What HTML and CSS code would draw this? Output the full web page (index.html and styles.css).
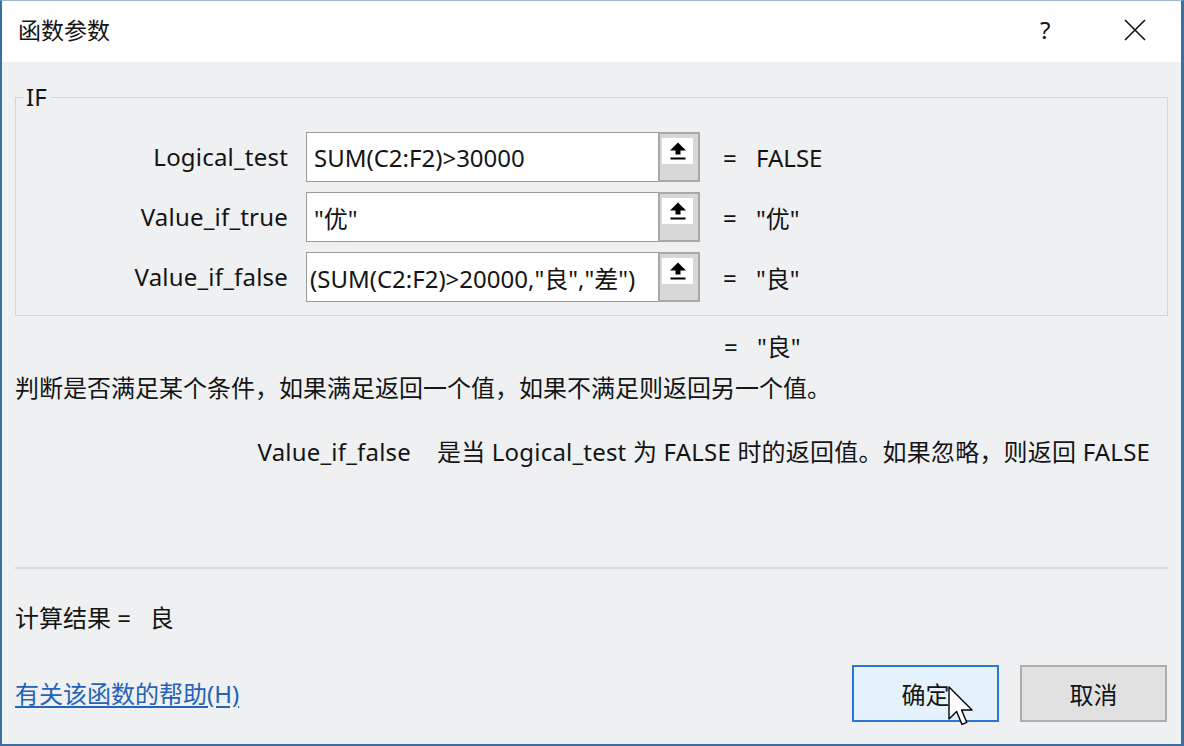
FILE: index.html
```html
<!DOCTYPE html>
<html lang="zh-CN">
<head>
<meta charset="utf-8">
<title>函数参数</title>
<link rel="stylesheet" href="styles.css">
</head>
<body>
<div class="window">
  <div class="titlebar">
    <span class="title">函数参数</span>
    <div class="ctrls">
      <span class="help">?</span>
      <svg class="close" width="22" height="22" viewBox="0 0 22 22"><path d="M1 1 L21 21 M21 1 L1 21" stroke="#111" stroke-width="1.6" fill="none"/></svg>
    </div>
  </div>
  <div class="body">
    <fieldset class="group">
      <legend>IF</legend>
      <div class="args">
        <div class="label">Logical_test</div>
        <div class="field">
          <div class="input"><span>SUM(C2:F2)&gt;30000</span></div>
          <div class="refbtn"><div class="refinner"><svg width="18" height="18" viewBox="0 0 18 18"><path d="M9 0.5 L1 8.5 H6.5 V12.5 H11.5 V8.5 H17 Z" fill="#000"/><rect x="1.5" y="15.5" width="15" height="2" fill="#000"/></svg></div></div>
        </div>
        <div class="result"><span class="eq">=</span><span>FALSE</span></div>

        <div class="label">Value_if_true</div>
        <div class="field">
          <div class="input"><span>"优"</span></div>
          <div class="refbtn"><div class="refinner"><svg width="18" height="18" viewBox="0 0 18 18"><path d="M9 0.5 L1 8.5 H6.5 V12.5 H11.5 V8.5 H17 Z" fill="#000"/><rect x="1.5" y="15.5" width="15" height="2" fill="#000"/></svg></div></div>
        </div>
        <div class="result"><span class="eq">=</span><span>"优"</span></div>

        <div class="label">Value_if_false</div>
        <div class="field">
          <div class="input tight"><span>(SUM(C2:F2)&gt;20000,"良","差")</span></div>
          <div class="refbtn"><div class="refinner"><svg width="18" height="18" viewBox="0 0 18 18"><path d="M9 0.5 L1 8.5 H6.5 V12.5 H11.5 V8.5 H17 Z" fill="#000"/><rect x="1.5" y="15.5" width="15" height="2" fill="#000"/></svg></div></div>
        </div>
        <div class="result"><span class="eq">=</span><span>"良"</span></div>
      </div>
    </fieldset>

    <div class="args total">
      <div></div>
      <div></div>
      <div class="result"><span class="eq">=</span><span>"良"</span></div>
    </div>

    <p class="desc">判断是否满足某个条件，如果满足返回一个值，如果不满足则返回另一个值。</p>
    <div class="argdesc">
      <span class="argname">Value_if_false</span>
      <span class="argtext">是当 Logical_test 为 FALSE 时的返回值。如果忽略，则返回 FALSE</span>
    </div>

    <div class="sep"></div>
    <div class="calc">计算结果 =&nbsp;&nbsp; 良</div>

    <div class="footer">
      <a class="helplink" href="#">有关该函数的帮助(H)</a>
      <div class="buttons">
        <button class="btn ok">确定</button>
        <button class="btn">取消</button>
      </div>
    </div>
  </div>
  <svg class="cursor" width="26" height="40" viewBox="0 0 13 20"><path d="M0.5 0.5 L0.5 16.5 L4.3 12.8 L7 19.2 L9.4 18.2 L6.8 12 L12 12 Z" fill="#fff" stroke="#000" stroke-width="0.7" stroke-linejoin="round"/></svg>
</div>
</body>
</html>
```

FILE: styles.css
```css
* { box-sizing: border-box; }
html, body { margin: 0; padding: 0; }
body {
  font-family: "Noto Sans", "Noto Sans CJK SC", sans-serif;
  font-size: 24px;
  color: #141414;
  background: #eff0f2;
}
.window {
  position: relative;
  width: 1184px;
  height: 746px;
  border-left: 2px solid #3b6ea8;
  border-right: 3px solid #3b6ea8;
  border-bottom: 2px solid #3b6ea8;
  border-top: 1px solid #9fb6d2;
  background: #eff0f2;
  display: flex;
  flex-direction: column;
}
.titlebar {
  height: 61px;
  background: #fff;
  display: flex;
  align-items: center;
  justify-content: space-between;
  padding-left: 16px;
  flex: none;
}
.title { font-size: 23px; line-height: 32px; margin-top: -3px; }
.ctrls { display: flex; align-items: center; height: 100%; }
.help { font-size: 24px; width: 20px; margin-right: 64px; margin-top: -4px; }
.close { margin-right: 35px; margin-top: -3px; }

.body {
  flex: 1;
  padding: 0 13px;
  display: flex;
  flex-direction: column;
}
.group {
  margin: 19px 0 0 0;
  padding: 19px 0 13px 0;
  border: 1px solid #d4d5d7;
  min-width: 0;
}
.group legend {
  margin-left: 8px;
  padding: 0 4px 0 2px;
  line-height: 32px;
  font-size: 24px;
}
.args {
  display: grid;
  grid-template-columns: 272px 394px 1fr;
  column-gap: 18px;
  row-gap: 10px;
}
.label {
  text-align: right;
  line-height: 50px;
  white-space: nowrap;
  letter-spacing: 0.2px;
}
.field {
  display: flex;
  height: 50px;
}
.input {
  flex: 1;
  background: #fff;
  border: 1px solid #9a9a9a;
  border-right: none;
  display: flex;
  align-items: center;
  padding-left: 7px;
  overflow: hidden;
  white-space: nowrap;
}
.input.tight {
  padding-left: 3px;
}
.refbtn {
  width: 42px;
  background: #d8d8d8;
  border: 2px solid #a9a9a9;
  padding: 4px 0 0 2px;
}
.refinner {
  width: 31px;
  height: 26px;
  background: #fff;
  display: flex;
  align-items: center;
  justify-content: center;
}
.result {
  display: flex;
  align-items: center;
  padding-left: 5px;
  white-space: nowrap;
}
.eq { width: 33px; }
.total {
  margin-top: 15px;
  padding-left: 2px;
  line-height: 32px;
}
.desc {
  margin: 9px 0 0 0;
  line-height: 32px;
}
.argdesc {
  margin-top: 32px;
  display: flex;
  line-height: 32px;
  white-space: nowrap;
  letter-spacing: 0.2px;
}
.argname {
  width: 396px;
  text-align: right;
  margin-right: 26px;
}
.sep {
  margin-top: 99px;
  height: 2px;
  background: #d9dadc;
}
.calc {
  margin: 33px 0 0 0;
  line-height: 32px;
}
.footer {
  margin-top: 31px;
  display: flex;
  align-items: center;
  justify-content: space-between;
}
.helplink {
  color: #2562b8;
  text-decoration: underline;
  text-underline-offset: 3px;
  line-height: 32px;
}
.buttons { display: flex; gap: 21px; margin-right: 1px; }
.btn {
  width: 147px;
  height: 57px;
  font-family: inherit;
  font-size: 24px;
  color: #141414;
  background: #e1e1e1;
  border: 2px solid #adadad;
  padding: 0;
}
.btn.ok {
  background: #e5f1fb;
  border-color: #2a78d0;
}
.cursor {
  position: absolute;
  left: 946px;
  top: 685px;
}
```
